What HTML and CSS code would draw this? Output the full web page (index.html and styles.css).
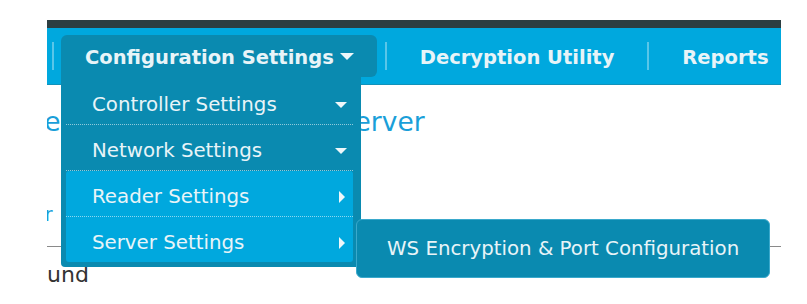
FILE: index.html
```html
<!DOCTYPE html>
<html lang="de">
<head>
    <meta charset="UTF-8">
    <meta name="viewport" content="width=device-width, initial-scale=1.0">
    <title>Controller Configuration</title>
    <link rel="stylesheet" href="styles.css">
</head>
<body>
    <div class="page">
        <div class="topbar"></div>
        <nav class="nav">
            <span class="sep"></span>
            <div class="tab active">
                Configuration Settings<span class="caret-down big"></span>
                <ul class="dropdown">
                    <li class="item">Controller Settings <span class="caret-down"></span></li>
                    <li class="item">Network Settings <span class="caret-down"></span></li>
                    <li class="item hl">Reader Settings <span class="caret-right"></span></li>
                    <li class="item hl">Server Settings <span class="caret-right"></span>
                        <div class="submenu">WS Encryption &amp; Port Configuration</div>
                    </li>
                </ul>
            </div>
            <span class="sep"></span>
            <div class="tab">Decryption Utility</div>
            <span class="sep"></span>
            <div class="tab last">Reports</div>
        </nav>

        <div class="content">
            <h1 class="title">Konfiguriere den WebSocket Server</h1>
            <p class="link-line"><a href="#">Controller</a></p>
            <div class="rule"></div>
            <p class="text">und</p>
        </div>
    </div>
</body>
</html>
```

FILE: styles.css
```css
body {
    margin: 0;
    font-family: 'DejaVu Sans', Verdana, sans-serif;
    background-color: #ffffff;
}
.page {
    width: 734px;
    margin: 20px 0 0 47px;
}
.topbar {
    height: 8px;
    background-color: #2c3e41;
}
.nav {
    display: flex;
    align-items: center;
    height: 56px;
    padding-left: 5px;
    background-color: #00a8de;
    border-bottom: 1px solid #1192ba;
    position: relative;
    z-index: 2;
}
.sep {
    width: 2px;
    height: 28px;
    background-color: rgba(255, 255, 255, 0.35);
}
.tab {
    box-sizing: border-box;
    height: 42px;
    padding: 4px 33px 0;
    font-size: 19.5px;
    font-weight: bold;
    line-height: 38px;
    color: #e8f4f8;
    white-space: nowrap;
}
.tab.last {
    padding-right: 0;
}
.tab.active {
    position: relative;
    align-self: flex-start;
    margin: 7px 8px 0 7px;
    padding: 4px 23px 0 24px;
    background-color: #0a8ab0;
    border-radius: 6px 6px 6px 0;
}
.caret-down {
    display: inline-block;
    width: 0;
    height: 0;
    border-left: 6px solid transparent;
    border-right: 6px solid transparent;
    border-top: 6px solid #eef7fa;
}
.caret-down.big {
    margin-left: 6px;
    vertical-align: 4px;
    border-left-width: 7px;
    border-right-width: 7px;
    border-top-width: 7px;
}
.caret-right {
    display: inline-block;
    width: 0;
    height: 0;
    margin-right: 2px;
    border-top: 6px solid transparent;
    border-bottom: 6px solid transparent;
    border-left: 6px solid #eef7fa;
}
.dropdown {
    position: absolute;
    top: 42px;
    left: 0;
    width: 300px;
    box-sizing: border-box;
    margin: 0;
    padding: 2px 8px 5px 5px;
    list-style: none;
    background-color: #0a8ab0;
    border-radius: 0 0 4px 4px;
}
.item {
    position: relative;
    box-sizing: border-box;
    display: flex;
    align-items: center;
    justify-content: space-between;
    height: 46px;
    padding: 6px 6px 0 26px;
    font-size: 19.8px;
    font-weight: normal;
    line-height: normal;
    color: #e8f4f8;
    border-bottom: 1px dotted rgba(255, 255, 255, 0.55);
}
.item:last-child {
    height: 45px;
    border-bottom: none;
}
.item.hl {
    background-color: #00a8de;
}
.item.hl:nth-child(3) {
    border-radius: 3px 3px 0 0;
}
.item.hl:last-child {
    border-radius: 0 0 3px 3px;
}
.submenu {
    position: absolute;
    top: 2px;
    left: calc(100% + 3px);
    width: 414px;
    height: 59px;
    box-sizing: border-box;
    display: flex;
    align-items: center;
    padding-left: 30px;
    font-size: 19.8px;
    color: #e8f4f8;
    background-color: #0a8ab0;
    border: 1px solid #3aa9cc;
    border-radius: 6px;
    white-space: nowrap;
}
.content {
    overflow: hidden;
}
.title {
    margin: 19px 0 0 -147px;
    font-size: 26.5px;
    font-weight: normal;
    line-height: 36px;
    word-spacing: 18.5px;
    color: #1a9fd9;
    white-space: nowrap;
}
.link-line {
    margin: 63px 0 0 -88px;
    font-size: 19px;
    line-height: 22px;
}
.link-line a {
    color: #1a9fd9;
    text-decoration: none;
}
.rule {
    height: 1px;
    margin-top: 21px;
    background-color: #8a8a8a;
}
.text {
    margin: 16px 0 0;
    font-size: 22px;
    line-height: 24px;
    color: #333333;
}
```
